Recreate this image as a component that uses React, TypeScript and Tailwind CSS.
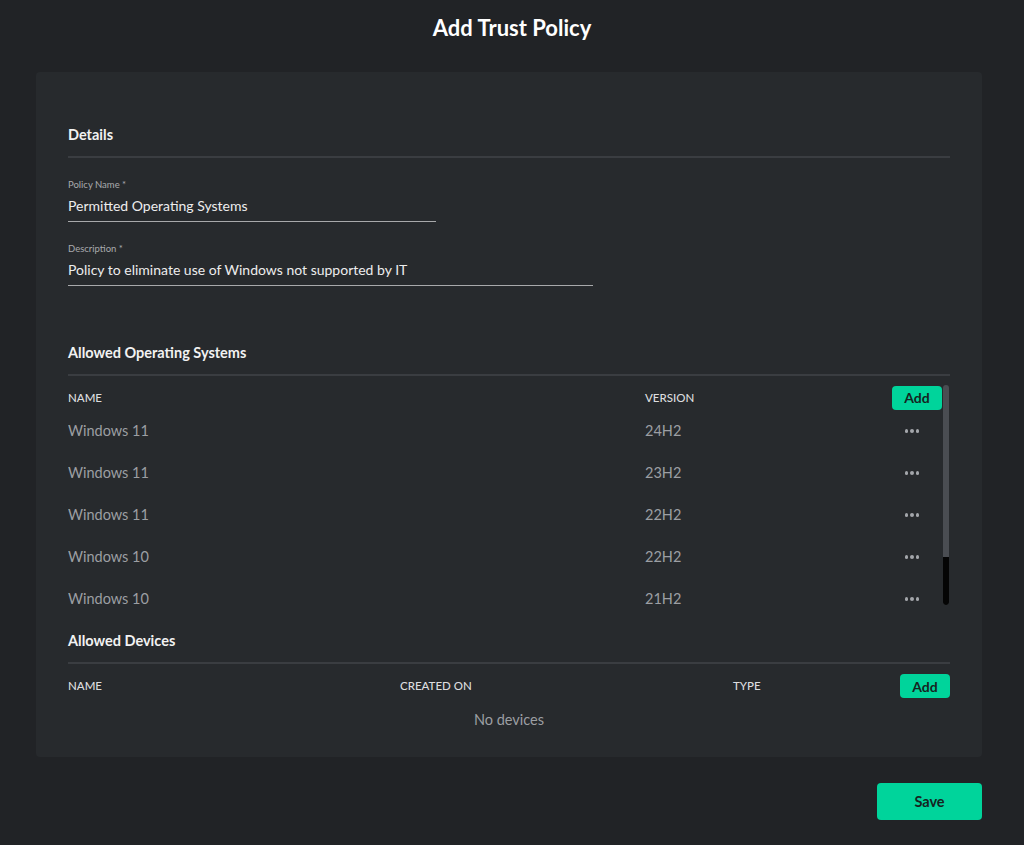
import React from 'react';

type OsRow = { name: string; version: string };

const osRows: OsRow[] = [
  { name: 'Windows 11', version: '24H2' },
  { name: 'Windows 11', version: '23H2' },
  { name: 'Windows 11', version: '22H2' },
  { name: 'Windows 10', version: '22H2' },
  { name: 'Windows 10', version: '21H2' },
];

const Dots = () => (
  <div className="flex items-center gap-[2px]">
    <span className="w-[3.5px] h-[3.5px] rounded-full bg-[#a3a6aa]" />
    <span className="w-[3.5px] h-[3.5px] rounded-full bg-[#a3a6aa]" />
    <span className="w-[3.5px] h-[3.5px] rounded-full bg-[#a3a6aa]" />
  </div>
);

const AddButton = ({ className = '' }: { className?: string }) => (
  <button className={`h-[24px] w-[50px] rounded-[4px] bg-[#00d49b] text-[14px] font-bold text-[#16241f] ${className}`}>
    Add
  </button>
);

const Field = ({ label, value, width }: { label: string; value: string; width: string }) => (
  <div className={`${width} mt-[21px]`}>
    <p className="text-[9.5px] leading-[12px] text-[#a9abae]">{label}</p>
    <p className="mt-[6px] pb-[6px] text-[14px] leading-[18px] text-[#ededed] border-b-[1.5px] border-[#a8a9ab]">
      {value}
    </p>
  </div>
);

const SectionTitle = ({ children, className = '' }: { children: React.ReactNode; className?: string }) => (
  <div className={className}>
    <h3 className="text-[14.5px] leading-[18px] font-bold text-[#f2f2f2]">{children}</h3>
    <div className="mt-[12px] h-[2px] bg-[#3a3d41]" />
  </div>
);

export default function App() {
  return (
    <div className="min-h-[845px] bg-[#212326] font-['Lato','Noto_Sans',sans-serif]">
      <div className="h-[54px] flex items-center justify-center">
        <h1 className="text-[22px] font-bold text-white">Add Trust Policy</h1>
      </div>

      <div className="ml-[36px] w-[946px] mt-[18px] rounded-[4px] bg-[#272a2d] px-[32px] pt-[54px] pb-[28px]">
        <SectionTitle>Details</SectionTitle>
        <Field label="Policy Name *" value="Permitted Operating Systems" width="w-[368px]" />
        <Field label="Description *" value="Policy to eliminate use of Windows not supported by IT" width="w-[525px]" />

        <SectionTitle className="mt-[58px]">Allowed Operating Systems</SectionTitle>
        <div className="mt-[9px] flex h-[223px] overflow-hidden">
          <div className="flex-1">
            <div className="flex h-[25px] items-center text-[11.5px] font-medium text-[#dcdddf]">
              <span className="w-[577px]">NAME</span>
              <span className="flex-1">VERSION</span>
              <AddButton />
            </div>
            {osRows.map((row, i) => (
              <div key={i} className="flex h-[42px] items-center text-[14.5px] text-[#9c9fa3]">
                <span className="w-[577px]">{row.name}</span>
                <span className="flex-1">{row.version}</span>
                <div className="w-[50px] flex justify-center pr-[10px]">
                  <Dots />
                </div>
              </div>
            ))}
          </div>
          <div className="ml-[1px] mr-[1px] w-[6px] h-[220px] rounded-full overflow-hidden flex flex-col">
            <div className="h-[172px] bg-[#4a4d52]" />
            <div className="flex-1 bg-[#050505] rounded-b-full" />
          </div>
        </div>

        <SectionTitle className="mt-[24px]">Allowed Devices</SectionTitle>
        <div className="mt-[10px] flex h-[24px] items-center text-[11.5px] font-medium text-[#dcdddf]">
          <span className="w-[332px]">NAME</span>
          <span className="w-[333px]">CREATED ON</span>
          <span className="flex-1">TYPE</span>
          <AddButton />
        </div>
        <p className="mt-[13px] text-center text-[14.5px] leading-[18px] text-[#9c9fa3]">No devices</p>
      </div>

      <div className="ml-[36px] w-[946px] mt-[26px] flex justify-end">
        <button className="h-[37px] w-[105px] rounded-[4px] bg-[#00d49b] text-[14.5px] font-bold text-[#16241f]">
          Save
        </button>
      </div>
    </div>
  );
}
